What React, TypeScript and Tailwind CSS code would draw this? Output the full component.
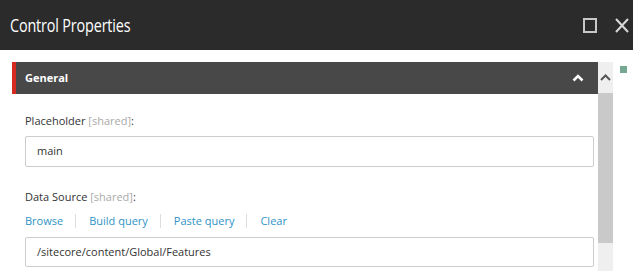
import React from "react";

export default function App() {
  const font = { fontFamily: '"Open Sans", "Noto Sans", sans-serif' };
  return (
    <div className="w-[633px] h-[271px] overflow-hidden bg-white" style={font}>
      <div className="h-[50px] bg-[#2b2b2b] flex items-center pl-[10px] pr-[3px]">
        <div className="flex-1">
          <div className="text-white text-[18px] inline-block origin-left scale-x-[0.8] tracking-[-0.2px]">Control Properties</div>
        </div>
        <div className="w-[14px] h-[15px] border-2 border-[#c8c8c8] mr-[18px]" />
        <svg width="14" height="15" viewBox="0 0 14 15" className="mr-[1px]">
          <path d="M1 1 L13 14 M13 1 L1 14" stroke="#d8d8d8" strokeWidth="2" />
        </svg>
      </div>
      <div className="flex pt-[12px] pl-[12px]">
        <div className="w-[586px] flex flex-col">
          <div className="h-[32px] bg-[#484848] border-l-4 border-[#d62b21] flex items-center pl-[9px] pr-[14px]">
            <div className="flex-1 text-white text-[11px] font-bold">General</div>
            <svg width="12" height="8" viewBox="0 0 12 8">
              <path d="M1.5 6.5 L6 2 L10.5 6.5" stroke="#fff" strokeWidth="2.5" fill="none" />
            </svg>
          </div>
          <div className="pl-[13px] pr-[4px] text-[11px] text-[#333]">
            <div className="mt-[18px] h-[18px] flex items-center">
              Placeholder&nbsp;<span className="text-[#aaa]">[shared]</span>:
            </div>
            <div className="mt-[6px] h-[31px] border border-[#ccc] rounded-[2px] flex items-center pl-[11px]">main</div>
            <div className="mt-[21px] h-[18px] flex items-center">
              Data Source&nbsp;<span className="text-[#aaa]">[shared]</span>:
            </div>
            <div className="mt-[8px] h-[14px] flex items-center text-[#2f93c6]">
              <span>Browse</span>
              <span className="w-px h-[14px] bg-[#ddd] ml-[12px] mr-[13px]" />
              <span>Build query</span>
              <span className="w-px h-[14px] bg-[#ddd] ml-[12px] mr-[13px]" />
              <span>Paste query</span>
              <span className="w-px h-[14px] bg-[#ddd] ml-[12px] mr-[13px]" />
              <span>Clear</span>
            </div>
            <div className="mt-[9px] h-[30px] border border-[#ccc] rounded-[2px] flex items-center pl-[11px]">
              /sitecore/content/Global/Features
            </div>
          </div>
        </div>
        <div className="w-[15px] h-[209px] bg-[#efefef] flex flex-col">
          <div className="h-[31px] flex items-center justify-center">
            <svg width="11" height="7" viewBox="0 0 11 7">
              <path d="M1 6 L5.5 1.5 L10 6" stroke="#555" strokeWidth="2" fill="none" />
            </svg>
          </div>
          <div className="h-[150px] bg-[#c9c9c9]" />
        </div>
        <div className="ml-[7px] mt-[4px] w-[7px] h-[7px] bg-[#74a893]" />
      </div>
    </div>
  );
}
